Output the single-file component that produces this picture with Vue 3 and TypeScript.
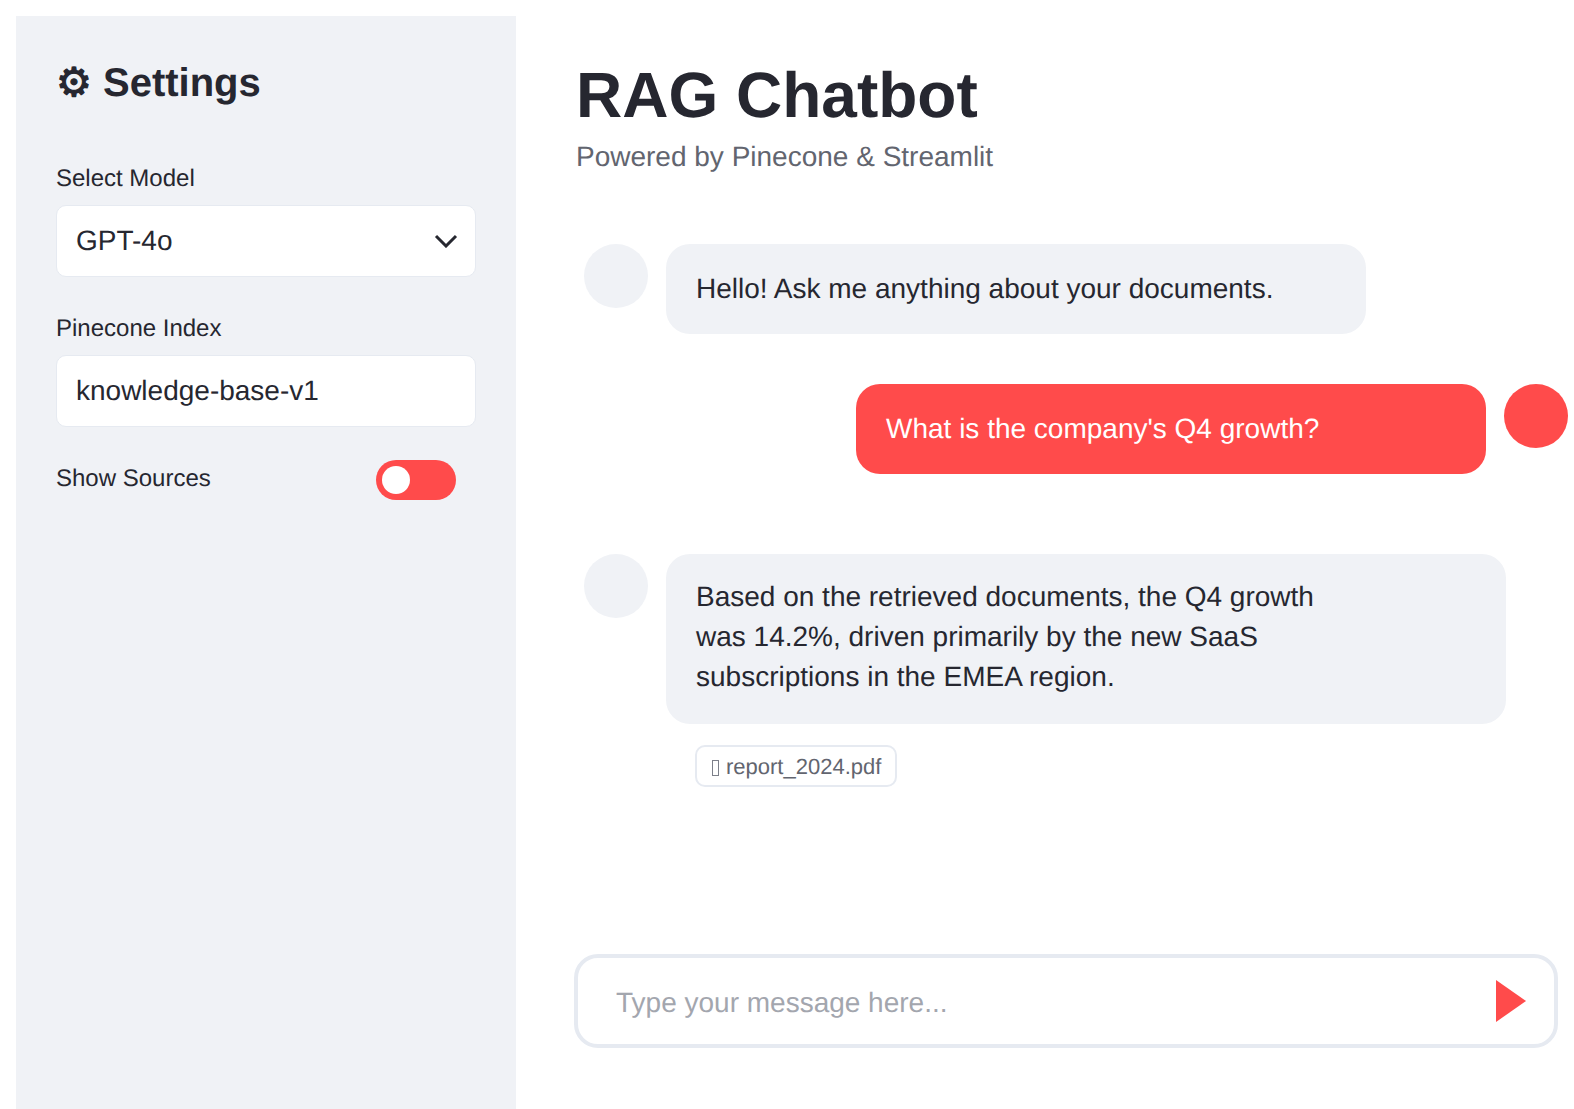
<script setup lang="ts">
interface Message {
  role: "bot" | "user";
  lines: string[];
  source?: string;
}

const messages: Message[] = [
  { role: "bot", lines: ["Hello! Ask me anything about your documents."] },
  { role: "user", lines: ["What is the company's Q4 growth?"] },
  {
    role: "bot",
    lines: [
      "Based on the retrieved documents, the Q4 growth",
      "was 14.2%, driven primarily by the new SaaS",
      "subscriptions in the EMEA region.",
    ],
    source: "report_2024.pdf",
  },
];
</script>

<template>
  <div class="page">
    <aside class="sidebar">
      <h2><span class="gear">⚙&#xFE0E;</span> Settings</h2>
      <label class="field-label">Select Model</label>
      <div class="select">
        <span>GPT-4o</span>
        <svg width="24" height="14" viewBox="0 0 24 14" fill="none">
          <path d="M2 2l10 10L22 2" stroke="#262730" stroke-width="3" />
        </svg>
      </div>
      <label class="field-label">Pinecone Index</label>
      <input class="text-input" type="text" value="knowledge-base-v1" />
      <div class="toggle-row">
        <span class="toggle-label">Show Sources</span>
        <div class="toggle"><div class="knob"></div></div>
      </div>
    </aside>

    <main class="main">
      <h1>RAG Chatbot</h1>
      <p class="subtitle">Powered by Pinecone &amp; Streamlit</p>

      <div class="chat">
        <div
          v-for="(msg, i) in messages"
          :key="i"
          class="row"
          :class="msg.role"
        >
          <div class="avatar"></div>
          <div class="body">
            <div class="bubble">
              <template v-for="(line, j) in msg.lines" :key="j">
                {{ line }}<br v-if="j < msg.lines.length - 1" />
              </template>
            </div>
            <div v-if="msg.source" class="source">
              <span class="tofu"></span>{{ msg.source }}
            </div>
          </div>
        </div>
      </div>

      <div class="composer">
        <input type="text" placeholder="Type your message here..." />
        <svg width="32" height="42" viewBox="0 0 32 42">
          <path d="M2 0l30 21L2 42z" fill="#ff4b4b" />
        </svg>
      </div>
    </main>
  </div>
</template>

<style>
body {
  overflow: hidden;
}
</style>

<style scoped>
.page {
  display: flex;
  height: 100vh;
  box-sizing: border-box;
  padding: 16px 0 0 16px;
  background: #fff;
  color: #262730;
  font-family: "Liberation Sans", Arial, sans-serif;
  text-rendering: geometricPrecision;
}

.sidebar {
  width: 500px;
  flex-shrink: 0;
  box-sizing: border-box;
  padding: 41px 40px 40px;
  background: #f0f2f6;
}

h2 {
  margin: 0 0 48px;
  font-size: 40px;
  line-height: 52px;
  font-weight: 700;
}

.gear {
  font-family: "DejaVu Sans", sans-serif;
  -webkit-text-stroke: 1.2px #262730;
}

.field-label {
  display: block;
  margin-bottom: 7px;
  padding-top: 3px;
  font-size: 24px;
  line-height: 38px;
}

.select,
.text-input {
  display: flex;
  align-items: center;
  justify-content: space-between;
  width: 100%;
  height: 72px;
  box-sizing: border-box;
  margin-bottom: 30px;
  padding: 0 19px;
  background: #fff;
  border: 1px solid #e6eaf1;
  border-radius: 10px;
  color: #262730;
  font-family: inherit;
  font-size: 28px;
  outline: none;
  text-rendering: inherit;
}

.select svg {
  margin-right: -2px;
}

.toggle-row {
  display: flex;
  align-items: flex-start;
  justify-content: space-between;
  padding: 3px 20px 0 0;
  font-size: 24px;
  line-height: 36px;
}

.toggle-label {
  padding-top: 1px;
}

.toggle {
  width: 80px;
  height: 40px;
  padding: 6px;
  box-sizing: border-box;
  border-radius: 20px;
  background: #ff4b4b;
}

.knob {
  width: 28px;
  height: 28px;
  border-radius: 50%;
  background: #fff;
}

.main {
  display: flex;
  flex-direction: column;
  flex: 1;
  min-width: 0;
  padding: 40px 0 0 60px;
}

h1 {
  margin: 0;
  font-size: 64px;
  line-height: 78px;
  font-weight: 700;
}

.subtitle {
  margin: 3px 0 67px;
  color: #62656f;
  font-size: 28px;
  line-height: 40px;
}

.chat {
  display: flex;
  flex-direction: column;
  padding: 0 6px 0 8px;
}

.row {
  display: flex;
  gap: 18px;
  margin-bottom: 50px;
}

.row.user {
  flex-direction: row-reverse;
  margin-bottom: 80px;
}

.avatar {
  width: 64px;
  height: 64px;
  flex-shrink: 0;
  border-radius: 50%;
  background: #f0f2f6;
}

.user .avatar {
  background: #ff4b4b;
}

.bubble {
  padding: 25px 30px;
  border-radius: 24px;
  background: #f0f2f6;
  font-size: 28px;
  line-height: 40px;
}

.row:first-child .bubble {
  width: 700px;
  box-sizing: border-box;
}

.row:last-child .bubble {
  width: 840px;
  box-sizing: border-box;
  padding: 23px 30px 27px;
}

.user .bubble {
  width: 630px;
  box-sizing: border-box;
  background: #ff4b4b;
  color: #fff;
}

.source {
  display: inline-block;
  margin: 21px 0 0 29px;
  padding: 2px 14px 0;
  border: 2px solid #e6eaf1;
  border-radius: 10px;
  color: #62656f;
  font-size: 22px;
  line-height: 36px;
}

.tofu {
  display: inline-block;
  width: 7px;
  height: 16px;
  box-sizing: border-box;
  margin: 0 7px 0 1px;
  border: 1px solid #7d808a;
  vertical-align: -2px;
}

.composer {
  display: flex;
  align-items: center;
  margin: auto 16px 61px -2px;
  padding: 0 28px 0 38px;
  height: 94px;
  box-sizing: border-box;
  border: 4px solid #e6eaf1;
  border-radius: 24px;
}

.composer input {
  flex: 1;
  border: none;
  outline: none;
  padding: 4px 0 0;
  color: #262730;
  font-family: inherit;
  font-size: 28px;
  text-rendering: inherit;
}

.composer input::placeholder {
  color: #a3a6ae;
  opacity: 1;
}
</style>
